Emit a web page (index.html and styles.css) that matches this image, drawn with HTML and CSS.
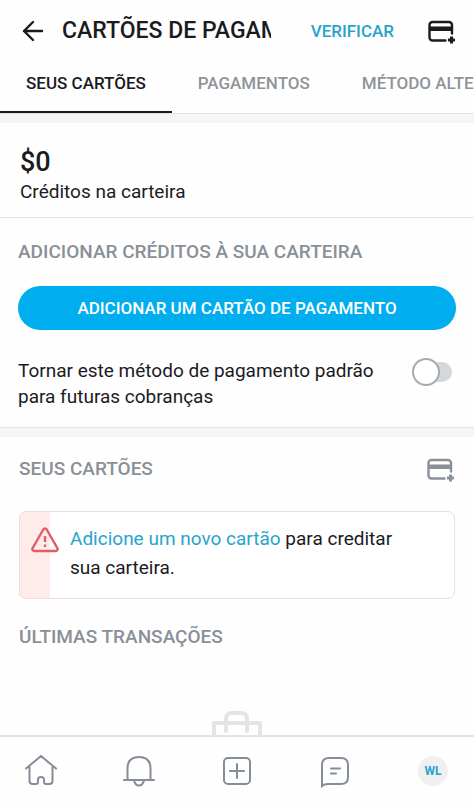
FILE: index.html
```html
<!DOCTYPE html>
<html lang="pt-BR">
<head>
<meta charset="utf-8">
<meta name="viewport" content="width=device-width, initial-scale=1">
<title>Cartões de pagamento</title>
<link rel="stylesheet" href="styles.css">
</head>
<body>
<header class="topbar">
  <button class="icon-button" type="button" aria-label="Voltar">
    <svg class="back-icon" width="22" height="22" viewBox="0 0 22 22"><path d="M20 11H2M11 2l-9 9 9 9"/></svg>
  </button>
  <h1 class="title">CARTÕES DE PAGAMENTO</h1>
  <a class="verify" href="#">VERIFICAR</a>
  <button class="icon-button" type="button" aria-label="Adicionar cartão">
    <svg class="card-icon" width="28" height="28" viewBox="0 -4 28 28"><path d="M17.500 19.500H4.500a3 3 0 0 1-3-3V4a3 3 0 0 1 3-3H21a3 3 0 0 1 3 3v8.500"/><path class="stripe" d="M1 5.500h23v4.500H1z"/><path class="plus" d="M23.500 15.500v7M20 19h7"/></svg>
  </button>
</header>
<nav class="tabs" aria-label="Seções">
  <a class="tab active" href="#" aria-current="page">SEUS CARTÕES</a>
  <a class="tab" href="#">PAGAMENTOS</a>
  <a class="tab" href="#">MÉTODO ALTERNATIVO</a>
</nav>
<main class="content">
  <section class="balance">
    <p class="amount">$0</p>
    <p class="caption">Créditos na carteira</p>
  </section>
  <section class="credits">
    <h2 class="heading">ADICIONAR CRÉDITOS À SUA CARTEIRA</h2>
    <button class="primary" type="button">ADICIONAR UM CARTÃO DE PAGAMENTO</button>
    <div class="default-row">
      <label class="default-label" for="default-method">Tornar este método de pagamento padrão para futuras cobranças</label>
      <input class="switch" type="checkbox" role="switch" id="default-method">
    </div>
  </section>
  <section class="cards">
    <div class="cards-head">
      <h2 class="heading">SEUS CARTÕES</h2>
      <button class="icon-button muted" type="button" aria-label="Adicionar cartão">
        <svg class="card-icon" width="28" height="28" viewBox="0 -4 28 28"><path d="M17.500 19.500H4.500a3 3 0 0 1-3-3V4a3 3 0 0 1 3-3H21a3 3 0 0 1 3 3v8.500"/><path class="stripe" d="M1 5.500h23v4.500H1z"/><path class="plus" d="M23.500 15.500v7M20 19h7"/></svg>
      </button>
    </div>
    <div class="alert">
      <svg class="alert-icon" width="28" height="26" viewBox="0 0 28 26"><path d="M12.300 2.500 1.800 20.800A2 2 0 0 0 3.500 24h21a2 2 0 0 0 1.700-3.200L15.700 2.500a2 2 0 0 0-3.400 0zM14 9v6M14 17.500v2.500"/></svg>
      <p class="alert-text"><a href="#">Adicione um novo cartão</a> para creditar sua carteira.</p>
    </div>
    <h2 class="heading">ÚLTIMAS TRANSAÇÕES</h2>
    <div class="empty">
      <svg class="bag" width="50" height="44" viewBox="0 0 50 44"><path d="M14 20V8q0-6 6-6h9q6 0 6 6v12M2 42V12h46v30z"/></svg>
    </div>
  </section>
</main>
<nav class="bottom-nav" aria-label="Principal">
  <a href="#" aria-label="Início"><svg width="34" height="34" viewBox="0 0 34 34"><path d="M2 14.500 17 2l15 12.500M5.500 12.500V27q0 3 3 3H12q2 0 2-2v-2.500q0-2.500 3-2.500t3 2.500V28q0 2 2 2h3.500q3 0 3-3V12.500"/></svg></a>
  <a href="#" aria-label="Notificações"><svg width="34" height="34" viewBox="0 0 34 34"><path d="M2 26h30M5.500 26V14.500Q5.500 3 17 3t11.500 11.500V26M12 26q1 5.500 5 5.500t5-5.500"/></svg></a>
  <a href="#" aria-label="Adicionar"><svg width="34" height="34" viewBox="0 0 34 34"><rect x="4" y="4" width="26" height="26" rx="4"/><path d="M17 10v14M10 17h14"/></svg></a>
  <a href="#" aria-label="Mensagens"><svg width="34" height="34" viewBox="0 0 34 34"><path d="M4 32V11q0-7 7-7h12q7 0 7 7v12q0 7-7 7H10q-4 0-6 2zM13 14.500h9M13 19.500h5"/></svg></a>
  <a href="#" aria-label="Perfil WL"><span class="avatar">WL</span></a>
</nav>
</body>
</html>
```
FILE: styles.css
```css
* { box-sizing: border-box; }

body {
  margin: 0;
  height: 100vh;
  display: flex;
  flex-direction: column;
  overflow: hidden;
  background: #fefefe;
  color: #1a1b1e;
  font-family: Roboto, "Liberation Sans", sans-serif;
}

h1, h2, p { margin: 0; }
a { color: #28a4cc; text-decoration: none; }
svg { display: block; fill: none; stroke: currentColor; }

.icon-button {
  flex: none;
  padding: 0;
  border: 0;
  background: none;
  color: inherit;
}

.topbar {
  flex: none;
  display: flex;
  align-items: center;
  height: 62px;
  padding: 0 18px 0 22px;
}

.back-icon { stroke-width: 2.4; stroke-linecap: round; stroke-linejoin: round; }

.title {
  flex: 1;
  min-width: 0;
  margin: 0 40px 0 18px;
  overflow: hidden;
  white-space: nowrap;
  font-size: 23px;
  font-weight: 500;
  line-height: 32px;
}

.verify {
  margin-right: 34px;
  font-size: 17px;
  font-weight: 500;
}

.card-icon { stroke-width: 2.4; stroke-linecap: round; }
.card-icon .stripe { fill: currentColor; stroke: none; }
.card-icon .plus { stroke-width: 3; stroke-linecap: butt; }

.tabs {
  flex: none;
  display: flex;
  height: 52px;
  overflow: hidden;
  border-bottom: 1px solid #dfe2e3;
}

.tab {
  flex: none;
  padding: 0 26px;
  color: #8e9499;
  font-size: 17px;
  font-weight: 500;
  line-height: 42px;
  white-space: nowrap;
}

.tab.active {
  color: #1a1b1e;
  border-bottom: 2px solid #1a1b1e;
}

.content {
  flex: 1;
  min-height: 0;
  overflow: hidden;
}

.balance {
  padding: 22px 20px 12px;
  border-top: 9px solid #f5f6f7;
  border-bottom: 1px solid #e3e4e6;
}

.amount { font-size: 27px; font-weight: 500; line-height: 34px; }
.caption { font-size: 19px; line-height: 26px; }

.credits {
  padding: 20px 18px 17px;
  border-bottom: 1px solid #e3e4e6;
}

.heading {
  color: #8a9097;
  font-size: 19px;
  font-weight: 500;
  line-height: 28px;
}

.primary {
  display: block;
  width: 100%;
  height: 44px;
  margin: 20px 0 28px;
  padding: 0;
  border: 0;
  border-radius: 22px;
  background: #00aeef;
  color: #fff;
  font: 500 17px/24px Roboto, "Liberation Sans", sans-serif;
}

.default-row { display: flex; gap: 24px; }
.default-label { flex: 1; font-size: 19px; line-height: 26px; }

.switch {
  appearance: none;
  flex: none;
  display: flex;
  align-items: center;
  width: 40px;
  height: 20px;
  margin: 4px 4px 0 0;
  border-radius: 10px;
  background: #d5d8db;
}

.switch::before {
  content: "";
  flex: none;
  width: 24px;
  height: 24px;
  border: 2px solid #a7abaf;
  border-radius: 50%;
  background: #fff;
}

.switch:checked { justify-content: flex-end; background: #00aeef; }

.cards { padding: 18px 19px 0; border-top: 9px solid #f5f6f7; }
.cards-head { display: flex; justify-content: space-between; align-items: center; }
.muted { color: #8a9097; }

.alert {
  display: flex;
  gap: 11px;
  margin: 28px 0 24px;
  padding: 12px 40px 16px 11px;
  border: 1px solid #efdcdf;
  border-radius: 7px;
  background: linear-gradient(90deg, #feebea 30px, #fff 30px);
}

.alert-icon {
  flex: none;
  margin-top: 3px;
  color: #df5f67;
  stroke-width: 2.4;
}

.alert-text { flex: 1; font-size: 19px; line-height: 29px; }

.empty { display: flex; justify-content: center; padding-top: 60px; }
.bag { color: #e3e4e6; stroke-width: 4; stroke-linejoin: round; stroke-linecap: round; }

.bottom-nav {
  flex: none;
  display: flex;
  justify-content: space-between;
  align-items: center;
  height: 70px;
  padding: 0 24px;
  border-top: 2px solid #e3e4e6;
}

.bottom-nav a { color: #858d97; stroke-width: 2; stroke-linecap: round; }

.bottom-nav .avatar {
  display: block;
  width: 30px;
  margin: 0 2px;
  border-radius: 50%;
  background: #f0f0f1;
  color: #28a4cc;
  font-size: 12px;
  font-weight: 700;
  line-height: 30px;
  text-align: center;
}
```
